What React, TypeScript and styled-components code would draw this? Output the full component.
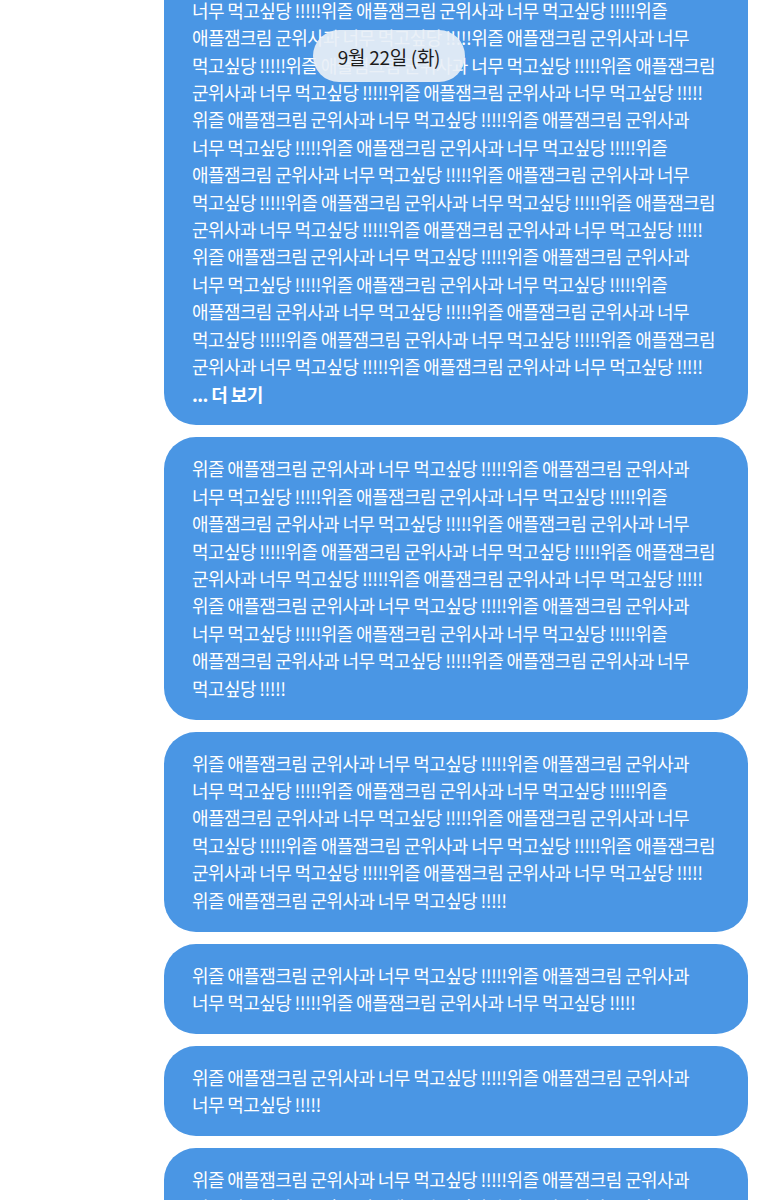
import styled, { createGlobalStyle } from "styled-components";

const GlobalStyle = createGlobalStyle`
  html, body {
    margin: 0;
    padding: 0;
    background: #ffffff;
  }
  body {
    font-family: "Noto Sans CJK KR", "Noto Sans", sans-serif;
    -webkit-font-smoothing: antialiased;
  }
`;

const Screen = styled.div`
  position: relative;
  width: 778px;
  height: 1200px;
  overflow: hidden;
  background: #ffffff;
`;

const Thread = styled.div`
  display: flex;
  flex-direction: column;
  gap: 12px;
  padding: 0 30px 0 164px;
  margin-top: -76px;
`;

const Bubble = styled.div`
  background: #4a96e4;
  color: #ffffff;
  border-radius: 32px;
  padding: 18px 20px 17.5px 28px;
  font-size: 18px;
  line-height: 27.4px;
  letter-spacing: -0.6px;
`;

const Line = styled.div`
  white-space: nowrap;
`;

const MoreLink = styled.div`
  font-weight: 700;
  white-space: nowrap;
`;

const DatePill = styled.div`
  position: absolute;
  top: 30px;
  left: 50%;
  transform: translateX(-50%);
  width: 152px;
  height: 52px;
  border-radius: 26px;
  background: rgba(232, 239, 246, 0.92);
  color: #1c1c1c;
  display: flex;
  align-items: center;
  justify-content: center;
  padding-top: 1px;
  box-sizing: border-box;
  font-size: 19px;
  letter-spacing: -0.3px;
`;

const A = "위즐 애플잼크림 군위사과 너무 먹고싶당 !!!!!위즐 애플잼크림 군위사과";
const B = "너무 먹고싶당 !!!!!위즐 애플잼크림 군위사과 너무 먹고싶당 !!!!!위즐";
const C = "애플잼크림 군위사과 너무 먹고싶당 !!!!!위즐 애플잼크림 군위사과 너무";
const D = "먹고싶당 !!!!!위즐 애플잼크림 군위사과 너무 먹고싶당 !!!!!위즐 애플잼크림";
const E = "군위사과 너무 먹고싶당 !!!!!위즐 애플잼크림 군위사과 너무 먹고싶당 !!!!!";

type Message = { lines: string[]; more?: boolean };

const messages: Message[] = [
  { lines: [E, A, B, C, D, E, A, B, C, D, E, A, B, C, D, E], more: true },
  { lines: [A, B, C, D, E, A, B, C, "먹고싶당 !!!!!"] },
  { lines: [A, B, C, D, E, "위즐 애플잼크림 군위사과 너무 먹고싶당 !!!!!"] },
  { lines: [A, "너무 먹고싶당 !!!!!위즐 애플잼크림 군위사과 너무 먹고싶당 !!!!!"] },
  { lines: [A, "너무 먹고싶당 !!!!!"] },
  { lines: [A, B, C] },
];

const App = () => {
  return (
    <Screen>
      <GlobalStyle />
      <Thread>
        {messages.map((m, i) => (
          <Bubble key={i}>
            {m.lines.map((l, j) => (
              <Line key={j}>{l}</Line>
            ))}
            {m.more && <MoreLink>... 더 보기</MoreLink>}
          </Bubble>
        ))}
      </Thread>
      <DatePill>9월 22일 (화)</DatePill>
    </Screen>
  );
};

export default App;
